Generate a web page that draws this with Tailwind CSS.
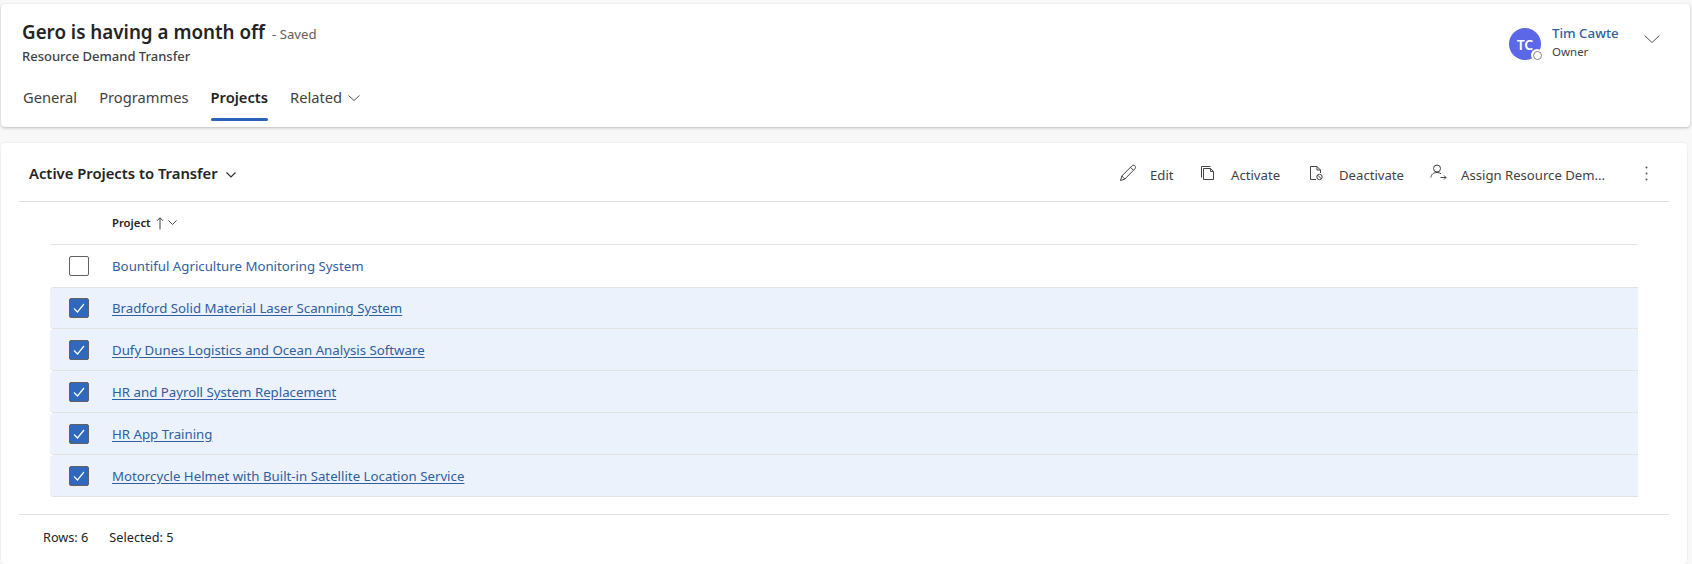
<!DOCTYPE html>
<html><head><meta charset="utf-8"><script src="https://cdn.jsdelivr.net/npm/@tailwindcss/browser@4"></script></head>
<body class="m-0 bg-[#f8f8f8] w-[1692px] h-[564px] overflow-hidden font-['Noto_Sans',sans-serif] text-[#242424]">
<div class="pt-[4px] pl-[1px] pr-[2px] flex flex-col h-full">
<header class="h-[123px] bg-white rounded-[4px] shadow-[0_1px_3px_rgba(0,0,0,0.25)] flex flex-col shrink-0">
  <div class="flex justify-between h-[72px]">
    <div class="pl-[21px] pt-[15px]">
      <div class="flex items-baseline gap-[7px] leading-[27px]"><span class="text-[18.8px] font-semibold">Gero is having a month off</span><span class="text-[13.2px] text-[#616161]">- Saved</span></div>
      <div class="text-[13px] font-medium text-[#424242] leading-[18px] -mt-[1px]">Resource Demand Transfer</div>
    </div>
    <div class="flex pt-[24px] pr-[30px]">
      <div class="relative w-[32px] h-[32px] rounded-full bg-[#5b67e6] text-white text-[14px] font-semibold flex items-center justify-center">TC
        <span class="absolute right-[-2px] bottom-[-1px] w-[12px] h-[12px] rounded-full bg-white flex items-center justify-center"><span class="w-[9px] h-[9px] rounded-full border border-[#8a8a8a]"></span></span>
      </div>
      <div class="ml-[11px] w-[92px]">
        <div class="text-[13.3px] font-medium text-[#315f9f] leading-[18px] -mt-[4px]">Tim Cawte</div>
        <div class="text-[11.5px] text-[#424242] leading-[18px] mt-[1px]">Owner</div>
      </div>
      <svg class="w-[16px] h-[8px] mt-[7px]" viewBox="0 0 16 8" fill="none" stroke="#555" stroke-width="1"><path d="M0.5 0.5 8 7.5 15.5 0.5"/></svg>
    </div>
  </div>
  <nav class="flex pl-[22px] text-[14.7px] text-[#424242] gap-[22px] h-[48px]">
    <a class="pt-[10px]">General</a>
    <a class="pt-[10px]">Programmes</a>
    <a class="pt-[10px] relative font-semibold text-[#242424]">Projects<span class="absolute left-0 right-0 top-[42px] h-[3px] rounded-full bg-[#2b63b8]"></span></a>
    <a class="pt-[10px] flex items-start gap-[6px]">Related <svg class="w-[12px] h-[6px] mt-[9px]" viewBox="0 0 12 6" fill="none" stroke="#555" stroke-width="1"><path d="M.5.5 6 5.5 11.500.5"/></svg></a>
  </nav>
</header>
<main class="mt-[16px] mr-[3px] flex-1 bg-white rounded-[4px] shadow-[0_0_2px_rgba(0,0,0,0.12)] pl-[18px] pr-[18px]">
  <div class="h-[59px] border-b border-[#dcdcdc] flex items-center justify-between pl-[10px] pt-[3px]">
    <div class="flex items-center gap-[8px]"><span class="text-[14.8px] font-semibold">Active Projects to Transfer</span><svg class="w-[10px] h-[6px] mt-[2px]" viewBox="0 0 10 6" fill="none" stroke="#333" stroke-width="1.200"><path d="M.5.5 5 5 9.500.5"/></svg></div>
    <div class="flex items-center text-[13.15px] text-[#424242] pr-[21px]">
      <svg class="w-[18px] h-[18px] mr-[13px]" viewBox="0 0 18 18" fill="none" stroke="#444" stroke-width="1"><path d="M1.500 16.500 2.800 12 13 1.800c.8-.8 2.200-.8 3 .1s.7 2 0 2.800L5.800 15.100zM2.800 12l3 3M11.500 3.300l3 3"/></svg>
      <span class="w-[50px] mt-[4px]">Edit</span>
      <svg class="w-[16px] h-[16px] mr-[15px]" viewBox="0 0 16 16" fill="none" stroke="#444" stroke-width="1"><path d="M1.500 12.500V1.500h9"/><path d="M3.500 14.500V3.500h7l3 3v8z"/><path d="M10.500 3.500v3h3"/></svg>
      <span class="w-[77px] mt-[4px]">Activate</span>
      <svg class="w-[16px] h-[16px] mr-[15px]" viewBox="0 0 16 16" fill="none" stroke="#444" stroke-width="1"><path d="M8 14.500H2.500v-13H9l3.500 3.500v3"/><path d="M9 1.500V5h3.500"/><circle cx="11.500" cy="12" r="2.700"/><path d="M9.600 10.100l3.800 3.800"/></svg>
      <span class="w-[91px] mt-[4px]">Deactivate</span>
      <svg class="w-[18px] h-[16px] mr-[13px] -mt-[3px]" viewBox="0 0 18 16" fill="none" stroke="#444" stroke-width="1"><circle cx="7" cy="4.500" r="3.500"/><path d="M1 13.500c0-3 2.500-5 6-5 1.500 0 3 .5 4 1.300"/><path d="M10.500 13.500h5.500M14 11.500l2 2-2 2"/></svg>
      <span class="w-[184px] mt-[4px]">Assign Resource Dem...</span>
      <svg class="w-[3px] h-[15px]" viewBox="0 0 3 15" fill="#555"><circle cx="1.500" cy="1.500" r="1"/><circle cx="1.500" cy="7.500" r="1"/><circle cx="1.500" cy="13.500" r="1"/></svg>
    </div>
  </div>
  <div class="pl-[31px] pr-[31px]">
    <div class="h-[43px] border-b border-[#e5e5e5] flex items-center pl-[62px] pt-[1px] text-[11.300px] font-semibold">Project
      <svg class="w-[8px] h-[13px] ml-[5px]" viewBox="0 0 8 13" fill="none" stroke="#444" stroke-width="1"><path d="M4 12.500V.8M1 3.800 4 .8l3 3"/></svg>
      <svg class="w-[9px] h-[5px] ml-[4px] -mt-[3px]" viewBox="0 0 9 5" fill="none" stroke="#444" stroke-width="1"><path d="M.5.5 4.500 4.500 8.500.5"/></svg>
    </div>
    <div class="h-[42px] flex items-center text-[13.25px] text-[#315f9f]">
      <span class="ml-[19px] w-[20px] h-[20px] rounded-[2px] border border-[#616161] bg-white"></span>
      <a class="ml-[23px] mt-[2px]">Bountiful Agriculture Monitoring System</a>
    </div>
    <div class="h-[42px] flex items-center text-[13.25px] text-[#315f9f] bg-[#ebf2fc] rounded-l-[4px] border-y border-[#e3e3e3]">
      <span class="ml-[19px] w-[20px] h-[20px] rounded-[2px] border border-[#616161] bg-[#2f68bd] flex items-center justify-center"><svg class="w-[12px] h-[10px]" viewBox="0 0 12 10" fill="none" stroke="#fff" stroke-width="1.200"><path d="M1 5.500 4.500 9 11 1"/></svg></span>
      <a class="ml-[23px] mt-[2px] underline underline-offset-2">Bradford Solid Material Laser Scanning System</a>
    </div>
    <div class="h-[42px] flex items-center text-[13.25px] text-[#315f9f] bg-[#ebf2fc] rounded-l-[4px] border-b border-[#e3e3e3]">
      <span class="ml-[19px] w-[20px] h-[20px] rounded-[2px] border border-[#616161] bg-[#2f68bd] flex items-center justify-center"><svg class="w-[12px] h-[10px]" viewBox="0 0 12 10" fill="none" stroke="#fff" stroke-width="1.200"><path d="M1 5.500 4.500 9 11 1"/></svg></span>
      <a class="ml-[23px] mt-[2px] underline underline-offset-2">Dufy Dunes Logistics and Ocean Analysis Software</a>
    </div>
    <div class="h-[42px] flex items-center text-[13.25px] text-[#315f9f] bg-[#ebf2fc] rounded-l-[4px] border-b border-[#e3e3e3]">
      <span class="ml-[19px] w-[20px] h-[20px] rounded-[2px] border border-[#616161] bg-[#2f68bd] flex items-center justify-center"><svg class="w-[12px] h-[10px]" viewBox="0 0 12 10" fill="none" stroke="#fff" stroke-width="1.200"><path d="M1 5.500 4.500 9 11 1"/></svg></span>
      <a class="ml-[23px] mt-[2px] underline underline-offset-2">HR and Payroll System Replacement</a>
    </div>
    <div class="h-[42px] flex items-center text-[13.25px] text-[#315f9f] bg-[#ebf2fc] rounded-l-[4px] border-b border-[#e3e3e3]">
      <span class="ml-[19px] w-[20px] h-[20px] rounded-[2px] border border-[#616161] bg-[#2f68bd] flex items-center justify-center"><svg class="w-[12px] h-[10px]" viewBox="0 0 12 10" fill="none" stroke="#fff" stroke-width="1.200"><path d="M1 5.500 4.500 9 11 1"/></svg></span>
      <a class="ml-[23px] mt-[2px] underline underline-offset-2">HR App Training</a>
    </div>
    <div class="h-[42px] flex items-center text-[13.25px] text-[#315f9f] bg-[#ebf2fc] rounded-l-[4px] border-b border-[#e3e3e3]">
      <span class="ml-[19px] w-[20px] h-[20px] rounded-[2px] border border-[#616161] bg-[#2f68bd] flex items-center justify-center"><svg class="w-[12px] h-[10px]" viewBox="0 0 12 10" fill="none" stroke="#fff" stroke-width="1.200"><path d="M1 5.500 4.500 9 11 1"/></svg></span>
      <a class="ml-[23px] mt-[2px] underline underline-offset-2">Motorcycle Helmet with Built-in Satellite Location Service</a>
    </div>
  </div>
  <div class="mt-[17px] border-t border-[#e0e0e0] flex gap-[21px] pl-[24px] pt-[13px] text-[12.700px] leading-[18px]"><span>Rows: 6</span><span>Selected: 5</span></div>
</main>
</div>
</body></html>
